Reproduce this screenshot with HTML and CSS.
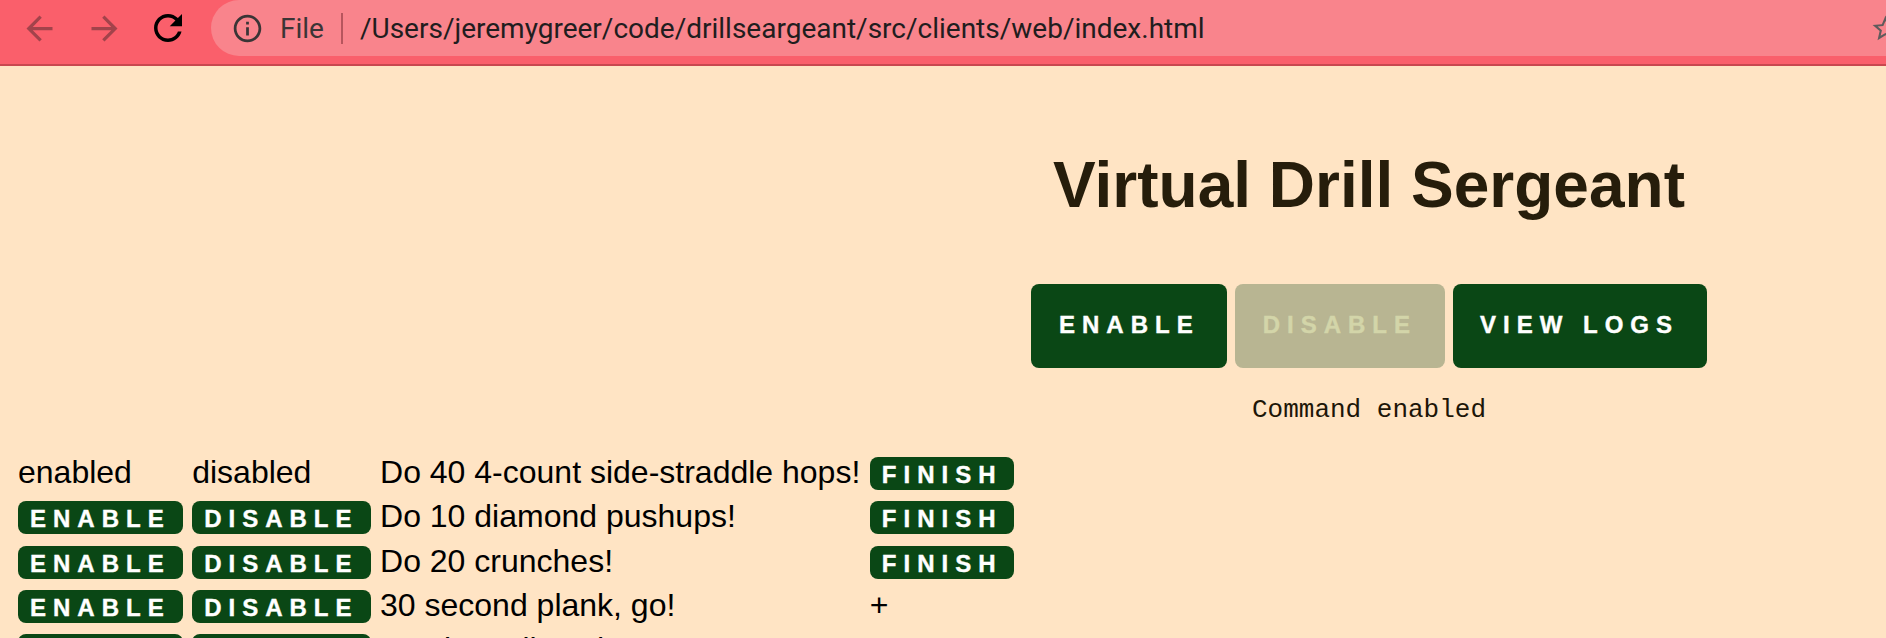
FILE: index.html
```
<!DOCTYPE html>
<html lang="en">
<head>
<meta charset="utf-8">
<title>Virtual Drill Sergeant</title>
<link rel="stylesheet" href="styles.css">
</head>
<body>
<div class="chrome">
  <div class="nav">
    <svg class="ico back" viewBox="0 0 24 24"><path d="M20 11H7.83l5.59-5.59L12 4l-8 8 8 8 1.41-1.41L7.83 13H20v-2z"/></svg>
    <svg class="ico fwd" viewBox="0 0 24 24"><path d="M4 11h12.17l-5.59-5.59L12 4l8 8-8 8-1.41-1.41L16.17 13H4v-2z"/></svg>
    <svg class="ico reload" viewBox="0 0 24 24"><path d="M17.65 6.35C16.2 4.9 14.21 4 12 4c-4.42 0-7.99 3.58-7.99 8s3.57 8 7.99 8c3.73 0 6.84-2.55 7.73-6h-2.08c-.82 2.33-3.04 4-5.65 4-3.31 0-6-2.69-6-6s2.69-6 6-6c1.66 0 3.14.69 4.22 1.78L13 11h7V4l-2.35 2.35z"/></svg>
    <div class="omnibox">
      <svg class="info" viewBox="0 0 24 24"><path d="M11 7h2v2h-2zm0 4h2v6h-2zm1-9C6.48 2 2 6.48 2 12s4.48 10 10 10 10-4.48 10-10S17.52 2 12 2zm0 18c-4.41 0-8-3.59-8-8s3.59-8 8-8 8 3.59 8 8-3.59 8-8 8z"/></svg>
      <span class="scheme">File</span>
      <span class="sep"></span>
      <span class="url">/Users/jeremygreer/code/drillseargeant/src/clients/web/index.html</span>
      <svg class="star" viewBox="0 0 24 24"><path d="M22 9.24l-7.19-.62L12 2 9.19 8.63 2 9.24l5.46 4.73L5.82 21 12 17.27 18.18 21l-1.63-7.03L22 9.24zM12 15.4l-3.76 2.27 1-4.28-3.32-2.88 4.38-.38L12 6.1l1.71 4.04 4.38.38-3.32 2.88 1 4.28L12 15.4z"/></svg>
    </div>
  </div>
</div>

<main class="page">
  <header class="hero">
    <h1 class="title">Virtual Drill Sergeant</h1>
    <div class="actions">
      <button class="btn btn-lg">ENABLE</button>
      <button class="btn btn-lg" disabled>DISABLE</button>
      <button class="btn btn-lg">VIEW LOGS</button>
    </div>
    <p class="status">Command enabled</p>
  </header>

  <div class="rows">
    <span class="cell">enabled</span>
    <span class="cell">disabled</span>
    <span class="cell">Do 40 4-count side-straddle hops!</span>
    <span class="cell"><button class="btn btn-sm">FINISH</button></span>

    <span class="cell"><button class="btn btn-sm">ENABLE</button></span>
    <span class="cell"><button class="btn btn-sm">DISABLE</button></span>
    <span class="cell">Do 10 diamond pushups!</span>
    <span class="cell"><button class="btn btn-sm">FINISH</button></span>

    <span class="cell"><button class="btn btn-sm">ENABLE</button></span>
    <span class="cell"><button class="btn btn-sm">DISABLE</button></span>
    <span class="cell">Do 20 crunches!</span>
    <span class="cell"><button class="btn btn-sm">FINISH</button></span>

    <span class="cell"><button class="btn btn-sm">ENABLE</button></span>
    <span class="cell"><button class="btn btn-sm">DISABLE</button></span>
    <span class="cell">30 second plank, go!</span>
    <span class="cell">+</span>

    <span class="cell"><button class="btn btn-sm">ENABLE</button></span>
    <span class="cell"><button class="btn btn-sm">DISABLE</button></span>
    <span class="cell">10 tricep dips, then rest!</span>
    <span class="cell">+</span>
  </div>
</main>
</body>
</html>
```

FILE: styles.css
```
html, body {
  margin: 0;
  padding: 0;
}
body {
  background: #ffe4c4;
  font-family: "Liberation Sans", Arial, sans-serif;
  color: #000;
  overflow: hidden;
  height: 638px;
}

/* browser chrome */
.chrome {
  height: 56px;
  padding-bottom: 8px;
  background: #fa5f6b;
  border-bottom: 2px solid #c9474f;
  overflow: hidden;
}
.nav {
  display: flex;
  align-items: center;
  height: 56px;
}
.ico {
  flex: none;
  width: 39px;
  height: 39px;
}
.back { margin-left: 20px; fill: #a2434b; }
.fwd { margin-left: 26px; fill: #a2434b; }
.reload { margin-left: 23px; width: 42px; height: 42px; fill: #000; }
.omnibox {
  flex: none;
  margin-left: 22px;
  width: 1720px;
  height: 56px;
  border-radius: 28px;
  background: #f9848c;
  display: flex;
  align-items: center;
  font-family: Roboto, "Liberation Sans", sans-serif;
  font-size: 28px;
}
.info {
  flex: none;
  width: 33px;
  height: 33px;
  margin-left: 20px;
  fill: #3a3536;
}
.scheme {
  margin-left: 16px;
  color: #3b3536;
}
.sep {
  width: 2px;
  height: 31px;
  margin-left: 17px;
  background: #b7555d;
}
.url {
  margin-left: 17px;
  color: #211d1e;
}
.star {
  flex: none;
  width: 31px;
  height: 31px;
  margin-left: auto;
  margin-right: 30px;
  fill: #5f5b5c;
}

/* page */
.hero {
  margin-left: 852px;
  text-align: center;
}
.title {
  margin: 82px 0 0;
  font-size: 64px;
  line-height: 74px;
  font-weight: bold;
  color: #261d0b;
}
.actions {
  margin-top: 62px;
  display: flex;
  justify-content: center;
  gap: 8px;
}
.btn {
  border: 0;
  margin: 0;
  font-family: "Liberation Sans", Arial, sans-serif;
  font-weight: bold;
  font-size: 24px;
  letter-spacing: 7px;
  color: #fff;
  -webkit-text-stroke: 0.4px currentColor;
  background: #0a4715;
  cursor: pointer;
  white-space: nowrap;
}
.btn-lg {
  height: 84px;
  padding: 0 27.5px 2px;
  line-height: 82px;
  border-radius: 8px;
}
.btn-lg:disabled {
  background: #b8b592;
  color: #d3d5a9;
  cursor: default;
}
.btn-sm {
  height: 33px;
  padding: 2px 12px 0;
  line-height: 31px;
  border-radius: 8px;
}
.status {
  margin: 27px 0 0;
  font-family: "Liberation Mono", "Courier New", monospace;
  font-size: 26px;
  line-height: 30px;
  color: #1d1608;
}

.rows {
  margin: 29px 0 0 18px;
  display: grid;
  grid-template-columns: auto auto auto auto;
  justify-content: start;
  column-gap: 9.5px;
  row-gap: 7.3px;
  align-items: baseline;
  font-size: 32px;
  line-height: 37px;
}
.cell {
  white-space: nowrap;
}
```
